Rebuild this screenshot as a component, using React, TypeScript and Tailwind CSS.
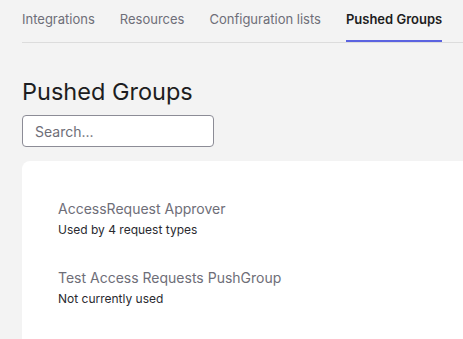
const tabs = ['Integrations', 'Resources', 'Configuration lists', 'Pushed Groups'];

const groups = [
  { name: 'AccessRequest Approver', usage: 'Used by 4 request types' },
  { name: 'Test Access Requests PushGroup', usage: 'Not currently used' },
];

export default function App() {
  const active = 'Pushed Groups';

  return (
    <div className="h-[339px] w-[463px] overflow-hidden bg-[#f3f3f3] pl-[22px] font-['Inter',sans-serif]">
      {/* Tabs */}
      <nav className="flex h-[43px] items-stretch gap-[25px] border-b border-[#dcdcdc]">
        {tabs.map((t) => (
          <div
            key={t}
            className={
              t === active
                ? 'flex items-center border-b-2 border-[#5b63e0] text-[13px] font-semibold text-[#1d1d21]'
                : 'flex items-center border-b-2 border-transparent text-[13px] text-[#6e6e78]'
            }
          >
            {t}
          </div>
        ))}
      </nav>

      {/* Header */}
      <h1 className="mt-[34px] text-[23.5px] leading-[30px] text-[#1d1d21]">Pushed Groups</h1>
      <input
        placeholder="Search..."
        className="mt-[8px] h-[32px] w-[192px] rounded-[4px] border border-[#8c8c96] bg-white px-3 text-[14px] text-[#1d1d21] placeholder:text-[#6e6e78] outline-none"
      />

      {/* List */}
      <div className="mt-[14px] h-[200px] rounded-tl-lg bg-white pl-9 pt-[38px]">
        <div className="flex flex-col gap-[29px]">
          {groups.map((g) => (
            <div key={g.name} className="flex flex-col gap-[2px]">
              <span className="text-[14px] leading-[20px] text-[#6e6e78]">{g.name}</span>
              <span className="text-[12px] leading-[18px] text-[#2a2a30]">{g.usage}</span>
            </div>
          ))}
        </div>
      </div>
    </div>
  );
}
